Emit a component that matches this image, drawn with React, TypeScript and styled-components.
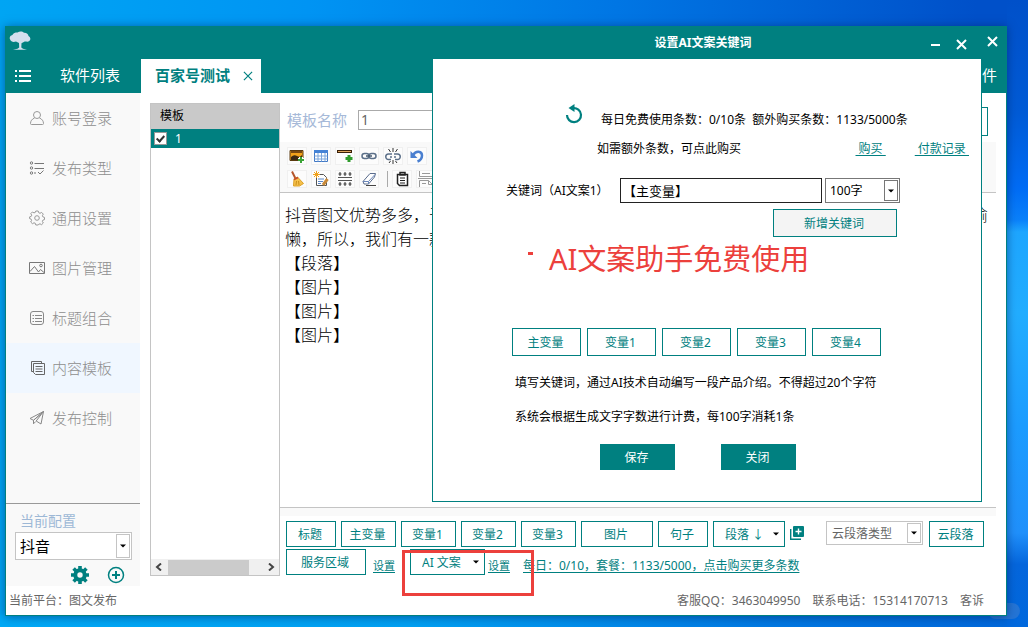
import React from "react";
import styled, { createGlobalStyle } from "styled-components";

const TEAL = "#008080";
const UI = `"Noto Sans", "Noto Sans CJK SC", sans-serif`;

const GlobalStyle = createGlobalStyle`
  *, *::before, *::after { box-sizing: border-box; }
  body { margin: 0; font-family: ${UI}; font-size: 12px; color: #000; }
  button, input, select { font: inherit; color: inherit; margin: 0; border-radius: 0; }
  p { margin: 0; }
`;

/* ---------- desktop and window frame ---------- */

const Desktop = styled.div`
  display: flex;
  position: relative;
  min-height: 100vh;
  padding: 26px 21px 11px 5px;
  background:
    linear-gradient(to bottom, #0050c9 0%, #005bd6 18%, #006cf5 30%, #0a80fa 35%, #1ea6ff 37%, #22adff 50%, #1c9cff 68%, #2090fb 85%, #0566dc 90%, #0068dd 100%) right top / 21px 100% no-repeat,
    linear-gradient(to right, #00a9f6 0%, #00a0f2 40%, #0078e2 75%, #0066da 100%) left bottom / 100% 12px no-repeat,
    linear-gradient(to right, #00a5f3 0%, #0094f3 30%, #0076e4 60%, #0050c9 95%) left top / 100% 100% no-repeat;
`;

const Window = styled.main`
  display: flex;
  flex-direction: column;
  flex: 1;
  min-width: 0;
  position: relative;
  z-index: 0;
  border: 1px solid ${TEAL};
  background: #fff;
  box-shadow: 0 1px 9px rgba(0, 30, 80, 0.5);
`;

const TitleBar = styled.header`
  display: flex;
  align-items: center;
  justify-content: space-between;
  height: 32px;
  padding: 0 8px 4px 3px;
  background: ${TEAL};
`;

const PlainButton = styled.button`
  display: flex;
  align-items: center;
  justify-content: center;
  padding: 0;
  border: 0;
  background: none;
  cursor: pointer;
`;

const TabBar = styled.nav`
  display: flex;
  align-items: center;
  height: 34px;
  padding: 0 9px;
  background: ${TEAL};
  color: #fff;
  font-size: 15px;
`;

const TabLink = styled.a`
  margin-left: 29px;
  padding-bottom: 4px;
  color: #fff;
  text-decoration: none;
`;

const ActiveTab = styled.div`
  display: flex;
  align-items: center;
  gap: 13px;
  align-self: stretch;
  width: 120px;
  margin-left: 21px;
  padding-left: 14px;
  background: #fff;
  color: ${TEAL};
  font-weight: 700;
`;

const TabName = styled.span`
  padding-bottom: 4px;
`;

const TabEnd = styled(TabLink)`
  margin-left: auto;
`;

const Body = styled.div`
  display: flex;
  flex: 1;
`;

/* ---------- sidebar ---------- */

const Sidebar = styled.aside`
  display: flex;
  flex-direction: column;
  width: 134px;
  background: #f9f9f9;
`;

const NavList = styled.div`
  flex: 1;
`;

const NavItem = styled.a<{ $active?: boolean }>`
  display: flex;
  align-items: center;
  gap: 7px;
  height: 50px;
  padding-left: 23px;
  background: ${(p) => (p.$active ? "#f0f7ff" : "transparent")};
  color: #8e8e8e;
  font-size: 15px;
  font-weight: 300;
  text-decoration: none;
`;

const NavText = styled.span`
  padding-bottom: 2px;
`;

const Config = styled.section`
  height: 83px;
  padding: 7px 8px 0 9px;
  border-top: 1px solid #999;
`;

const ConfigLabel = styled.label`
  display: block;
  padding-left: 5px;
  color: #9db8d6;
  font-size: 14px;
  line-height: 20px;
  margin-bottom: 1px;
`;

const ConfigActions = styled.div`
  display: flex;
  gap: 18px;
  padding: 6px 6px 0 56px;
`;

/* ---------- drop-down ---------- */

const SelectBox = styled.span<{ $w: number; $h: number; $border: string }>`
  display: flex;
  position: relative;
  flex: none;
  width: ${(p) => p.$w}px;
  height: ${(p) => p.$h}px;
  border: 1px solid ${(p) => p.$border};
  background: #fff;
`;

const NativeSelect = styled.select<{ $size: number; $pad: number; $color: string }>`
  appearance: none;
  width: 100%;
  padding: 0 0 0 ${(p) => p.$pad}px;
  border: 0;
  outline: 0;
  background: transparent;
  color: ${(p) => p.$color};
  font-size: ${(p) => p.$size}px;
`;

const Arrow = styled.span<{ $frame?: string }>`
  position: absolute;
  top: 1px;
  right: 1px;
  bottom: 1px;
  display: flex;
  align-items: center;
  justify-content: center;
  width: 14px;
  border: 1px solid ${(p) => p.$frame || "transparent"};
  pointer-events: none;
`;

type ComboProps = {
  id?: string;
  label?: string;
  value: string;
  w: number;
  h: number;
  border: string;
  frame?: string;
  size?: number;
  pad?: number;
  color?: string;
};

function Combo({ id, label, value, w, h, border, frame, size = 12, pad = 4, color = "#000" }: ComboProps) {
  return (
    <SelectBox $w={w} $h={h} $border={border}>
      <NativeSelect id={id} aria-label={label} $size={size} $pad={pad} $color={color}>
        <option>{value}</option>
      </NativeSelect>
      <Arrow $frame={frame}>
        <svg width="6" height="4" viewBox="0 0 6 4"><path d="M0 0.5h6L3 3.5z" fill="#000" /></svg>
      </Arrow>
    </SelectBox>
  );
}

/* ---------- template list ---------- */

const TemplateList = styled.section`
  display: flex;
  flex-direction: column;
  width: 130px;
  margin: 10px 0 10px 10px;
  border: 1px solid #c4c4c4;
`;

const ListHeader = styled.div`
  height: 25px;
  padding-left: 9px;
  background: #c9c9c9;
  line-height: 24px;
`;

const ListRow = styled.label`
  display: flex;
  align-items: center;
  gap: 8px;
  height: 19px;
  padding-left: 3px;
  background: ${TEAL};
  color: #fff;
`;

const Tick = styled.input`
  appearance: none;
  width: 13px;
  height: 13px;
  border: 1px solid #999;
  background: #fff;
  position: relative;

  &:checked::after {
    content: "";
    position: absolute;
    left: 3px;
    top: 1px;
    width: 5px;
    height: 8px;
    border: solid #333;
    border-width: 0 2px 2px 0;
    transform: rotate(42deg);
  }
`;

const ListSpace = styled.div`
  flex: 1;
`;

const ScrollBar = styled.div`
  display: flex;
  align-items: center;
  gap: 2px;
  height: 16px;
  background: #f0f0f0;
`;

const ScrollThumb = styled.div`
  width: 81px;
  height: 15px;
  background: #cbcbcb;
`;

const ScrollButton = styled(PlainButton)`
  width: 15px;
  height: 15px;
  &:last-child { margin-left: auto; }
`;

/* ---------- editor ---------- */

const Editor = styled.section`
  display: flex;
  flex-direction: column;
  flex: 1;
  min-width: 0;
  margin-right: 10px;
`;

const NameRow = styled.div`
  display: flex;
  align-items: flex-start;
  gap: 11px;
  padding: 14px 8px 6px 7px;
  color: #a6b9d8;
  font-size: 15px;
  line-height: 27px;
`;

const NameInput = styled.input`
  flex: 1;
  min-width: 0;
  height: 20px;
  margin-top: 3px;
  padding: 0 2px 1px;
  border: 1px solid #aaa;
  color: #666;
  font-size: 14px;
  line-height: 17px;
`;

const OutlineButton = styled.button<{ $w: number; $h?: number; $fill?: string }>`
  flex: none;
  width: ${(p) => p.$w}px;
  height: ${(p) => p.$h || 26}px;
  padding: 0 2px 0 0;
  border: 1px solid ${TEAL};
  background: ${(p) => p.$fill || "#fff"};
  color: ${TEAL};
  white-space: nowrap;
  cursor: pointer;
`;

const Toolbar = styled.div`
  display: flex;
  flex-direction: column;
  gap: 5px;
  padding: 5px 8px 4px 7px;
  border-bottom: 1px solid #c4c4c4;
  background: #f9f9f9;
`;

const ToolRow = styled.div`
  display: flex;
  gap: 4px;
`;

const Tool = styled(PlainButton)`
  width: 20px;
  height: 18px;
  border: 1px solid #f0f0f0;
  background: #fcfcfc;
`;

const Divider = styled.span`
  width: 1px;
  margin: 1px 0 1px 4px;
  background: #aaa;
`;

const Article = styled.article`
  flex: 1;
  padding: 9px 8px 0 5px;
  color: #000;
  font-family: "Noto Sans CJK SC", sans-serif;
  font-size: 16px;
  line-height: 24px;
`;

const Line = styled.p`
  display: flex;
  justify-content: space-between;
  font-weight: 300;
`;

const Strip = styled.div`
  height: 9px;
  border-top: 1px solid #c4c4c4;
  background: #f9f9f9;
`;

const InsertBar = styled.div`
  display: flex;
  flex-direction: column;
  gap: 2px;
  padding: 5px 12px 11px 6px;
`;

const InsertRow = styled.div`
  display: flex;
  gap: 5px;
`;

const CloudGroup = styled.div`
  display: flex;
  gap: 6px;
  margin-left: auto;
`;

const ServiceRow = styled.div`
  display: flex;
  align-items: flex-start;
  height: 26px;
`;

const TextLink = styled.a<{ $gap?: number }>`
  margin-left: ${(p) => p.$gap || 0}px;
  color: ${TEAL};
  line-height: 34px;
  text-decoration: underline;
  text-underline-offset: 2px;
  white-space: pre;
`;

const SmallLink = styled(TextLink)`
  font-size: 11px;
`;

const Marked = styled.div`
  display: flex;
  position: relative;
  margin-left: 15px;
`;

const MarkFrame = styled.span`
  position: absolute;
  left: -8px;
  top: 1px;
  width: 132px;
  height: 46px;
  border: 3px solid #ec403c;
  pointer-events: none;
`;

const StatusBar = styled.footer`
  display: flex;
  gap: 12px;
  height: 29px;
  padding: 0 22px 0 3px;
  color: #666;
  line-height: 30px;
`;

const StatusLeft = styled.span`
  margin-right: auto;
`;

/* ---------- dialog ---------- */

const Dialog = styled.section`
  position: absolute;
  top: 0;
  right: 24px;
  width: 550px;
  max-width: 100%;
  border: solid ${TEAL};
  border-width: 0 1px 1px;
  background: #fff;
`;

const DialogTitle = styled.header`
  display: flex;
  align-items: center;
  height: 32px;
  padding-right: 14px;
  background: ${TEAL};
  color: #fff;
`;

const DialogHeading = styled.h1`
  flex: 1;
  margin: 0;
  padding-left: 43px;
  font-size: 12px;
  font-weight: 700;
  line-height: 30px;
  text-align: center;
`;

const WindowButtons = styled.span`
  display: flex;
  gap: 15px;
  padding-top: 2px;
`;

const DialogBody = styled.form`
  padding: 45px 0 31px;
`;

const QuotaRow = styled.div`
  display: flex;
  gap: 18px;
  height: 32px;
  padding-left: 132px;
  line-height: 32px;
  white-space: pre;
`;

const RefreshButton = styled(PlainButton)`
  width: 18px;
  height: 20px;
`;

const BuyRow = styled.div`
  display: flex;
  justify-content: space-between;
  height: 26px;
  padding: 0 12px 0 164px;
  line-height: 26px;
`;

const BuyLinks = styled.span`
  display: flex;
  gap: 29px;

  ${TextLink} { line-height: 26px; }
`;

const KeywordRow = styled.div`
  display: flex;
  align-items: center;
  margin-top: 16px;
  padding-left: 73px;
`;

const KeywordLabel = styled.label`
  width: 114px;
  padding-bottom: 2px;
`;

const KeywordInput = styled.input`
  width: 202px;
  height: 25px;
  margin-right: 3px;
  padding: 0 2px;
  border: 1px solid #222;
  font-size: 13px;
`;

const AddRow = styled.div`
  display: flex;
  justify-content: flex-end;
  padding: 6px 84px 0 0;
`;

const Banner = styled.p`
  display: flex;
  gap: 16px;
  padding-left: 95px;
  color: #ec403c;
  font-size: 29px;
  line-height: 44px;

  &::before {
    content: "";
    width: 5px;
    height: 3px;
    margin-top: 15px;
    background: #ec403c;
  }
`;

const VariableRow = styled.div`
  display: flex;
  gap: 6px;
  padding: 47px 0 10px 79px;
`;

const Hint = styled.p`
  padding-left: 82px;
  line-height: 34px;
`;

const DialogActions = styled.div`
  display: flex;
  gap: 46px;
  padding: 10px 0 0 167px;
`;

const SolidButton = styled.button`
  width: 75px;
  height: 26px;
  padding: 0 2px 0 0;
  border: 0;
  background: ${TEAL};
  color: #fff;
  cursor: pointer;
`;

const Watermark = styled.span`
  position: absolute;
  right: 8px;
  bottom: 8px;
  width: 32px;
  height: 16px;
  border-radius: 8px;
  background: rgba(120, 150, 200, 0.3);
`;

/* ---------- drawings ---------- */

const Tree = () => (
  <svg width="22" height="20" viewBox="0 0 22 20" fill="#d3dfee" aria-hidden="true">
    <path d="M1 8.2C0 6 2 4.2 3.4 4 4.5 1.700 7 1.500 8.500 1.600 10.500 0 13.500.3 15 1.700 17.500 1.500 19.300 3.200 19.500 5 21.500 6 22 8.500 20.500 9.800 19 11.300 17 10.300 15.700 10.600L12.500 12.200 12.300 16.500 14 17.700 18 18.700H4L8.500 17.700 10.200 16.500 10 12 7 10.500C4.500 11.300 2 11 1 8.200z" />
  </svg>
);

const Cross = ({ size = 11, width = 2, color = "#fff" }) => (
  <svg width={size} height={size} viewBox="0 0 11 11" stroke={color} strokeWidth={width} aria-hidden="true">
    <path d="M1 1l9 9M10 1l-9 9" />
  </svg>
);

const Stroke = ({ children, color = "#999", size = 16 }: { children: React.ReactNode; color?: string; size?: number }) => (
  <svg width={size} height={size} viewBox="0 0 16 16" fill="none" stroke={color} strokeWidth="1" aria-hidden="true">
    {children}
  </svg>
);

const NAV = [
  {
    text: "账号登录",
    icon: <Stroke><circle cx="8" cy="5" r="3.500" /><path d="M5.500 8C3 9 1.500 11 1.500 13.500q0 1 1 1h11q1 0 1-1C14.500 11 13 9 10.500 8" /></Stroke>,
  },
  {
    text: "发布类型",
    icon: <Stroke color="#777"><circle cx="2.500" cy="3" r="1.200" /><circle cx="2.500" cy="8" r="1.200" /><circle cx="2.500" cy="13" r="1.200" /><path d="M5.500 3.500h9.500M5.500 8.500h9.500M5 13h2M9 12l2 2 3.500-3.500" /></Stroke>,
  },
  {
    text: "通用设置",
    icon: <Stroke><path d="M6.800 1h2.400l.5 1.700 1.300.6 1.600-.9 1.700 1.700-.9 1.600.5 1.200 1.600.5v2.200l-1.600.5-.5 1.300.9 1.600-1.700 1.700-1.600-.9-1.300.5L9.200 15H6.800l-.5-1.700-1.300-.5-1.600.9L1.700 12l.9-1.600-.5-1.300L.6 8.600V6.900L2.200 6.400l.5-1.200-.9-1.600L3.400 2l1.600.9 1.300-.5z" /><circle cx="8" cy="8" r="2.300" /></Stroke>,
  },
  {
    text: "图片管理",
    icon: <Stroke color="#777"><path d="M.5 2.500h15v11H.5zM1 11.500l4.500-5 4 5.500 2-2.500 3.500 3" /><circle cx="12" cy="5.500" r="1.300" /></Stroke>,
  },
  {
    text: "标题组合",
    icon: <Stroke color="#888"><rect x="1.500" y="1.500" width="13" height="13" rx="2.500" /><path d="M3.500 5.500h1.500M6 5.500h7M3.500 8.500h1.500M6 8.500h7M3.500 11.500h1.500M6 11.500h7" /></Stroke>,
  },
  {
    text: "内容模板",
    active: true,
    icon: <Stroke color="#666"><path d="M4.500 11.500h-2v-10h10v2M4.500 3.500h11v11h-9l-2-2zM6.500 6.500h7M6.500 9h7M6.500 11.500h7" /></Stroke>,
  },
  {
    text: "发布控制",
    icon: <Stroke color="#888"><path d="M14.500 1.500L1 8.500l3.500 1.800zM14.500 1.500L4.500 10.300v3.500l2.300-2.300M14.500 1.500L12 14l-4.800-3z" /></Stroke>,
  },
];

const Glyph = ({ children }: { children: React.ReactNode }) => (
  <svg width="16" height="16" viewBox="0 0 16 16" fill="none" aria-hidden="true">{children}</svg>
);

const TOOLS_TOP = [
  {
    name: "图片",
    icon: <Glyph><path d="M1 2.500h13v10H1z" fill="#f2a31b" stroke="#5b3a10" /><path d="M2 9q3-3 6-1t5-1v5H2z" fill="#3c2a14" /><path d="M2 3h11v2H2z" fill="#7a4a12" /><path d="M12 9v6M9 12h6" stroke="#fff" strokeWidth="4" /><path d="M12 9v6M9 12h6" stroke="#3aa336" strokeWidth="2" /></Glyph>,
  },
  {
    name: "表格",
    icon: <Glyph><path d="M1.500 2.500h13v11h-13z" fill="#fff" stroke="#3f77c4" /><path d="M1 2h14v3H1z" fill="#4583d6" /><path d="M1.500 8h13M1.500 11h13M5 5v8.500M8.500 5v8.500M12 5v8.500" stroke="#7ba6dd" /></Glyph>,
  },
  {
    name: "分隔线",
    icon: <Glyph><path d="M0 3.500h15" stroke="#3a2008" strokeWidth="3" /><path d="M1 3.500h13" stroke="#e0a860" /><path d="M12 7v7M8.500 10.500h7" stroke="#2f9b2c" strokeWidth="3" /></Glyph>,
  },
  {
    name: "链接",
    icon: <Glyph><rect x="1" y="5.500" width="7" height="5" rx="2.500" stroke="#5c7089" strokeWidth="1.500" /><rect x="8" y="5.500" width="7" height="5" rx="2.500" stroke="#5c7089" strokeWidth="1.500" /><path d="M5 8h6" stroke="#46586e" strokeWidth="1.500" /></Glyph>,
  },
  {
    name: "取消链接",
    icon: <Glyph><path d="M7 6H3.500a2.500 2.500 0 0 0 0 5.500H6M9 6h3.500a2.500 2.500 0 0 1 0 5.500H10M5 9h2M9 9h2" stroke="#5c7089" strokeWidth="1.500" /><path d="M8 0v4M3.500 1l2 3M12.500 1l-2 3M8 12v4M4 15l1.500-2M12 15l-1.500-2" stroke="#333" /></Glyph>,
  },
  {
    name: "撤销",
    icon: <Glyph><path d="M4 7C7 2 13 3 13 7.500c0 3-2 5-4.500 6" stroke="#4a7fd0" strokeWidth="2.500" /><path d="M1.500 3v7h7z" fill="#4a7fd0" /></Glyph>,
  },
];

const TOOLS_BOTTOM = [
  {
    name: "清除格式",
    icon: <Glyph><path d="M3 0.500l3.500 7" stroke="#b5562a" strokeWidth="2" /><path d="M5 8l3.500-2 6 6.500-4 2.500H4.500z" fill="#f5c04a" stroke="#dba028" /><path d="M7 14l.5-4M10 14l-.5-4" stroke="#c98f1c" /><path d="M5 8.500L9 6.500" stroke="#c4472a" strokeWidth="1.500" /></Glyph>,
  },
  {
    name: "自动排版",
    icon: <Glyph><path d="M3.500 3.500h7l3 3v8h-10z" fill="#fff" stroke="#555" /><path d="M5 8h6M5 10.500h5M5 12.500h3" stroke="#5a86c5" /><path d="M3.500 0v7M0 3.500h7M1 1l5 5M6 1L1 6" stroke="#f0a21c" /><path d="M14.500 8L10 14" stroke="#c88a3a" strokeWidth="3" /></Glyph>,
  },
  {
    name: "段落间距",
    icon: <Glyph><path d="M1 6.500h14M1 9.500h14" stroke="#555" /><path d="M3 1v4M8 1v4M13 1v4M3 11v4M8 11v4M13 11v4M1.500 3h3M6.500 3h3M11.500 3h3M1.500 13h3M6.500 13h3M11.500 13h3" stroke="#333" /></Glyph>,
  },
  {
    name: "橡皮擦",
    icon: <Glyph><path d="M2 10.500L9 2.500h5.500l-1 3.500-6 7H3z" fill="#fff" stroke="#5a6c8c" /><path d="M2 10.500h5.500L14 3.500M7.500 10.500v2.500" stroke="#6b87bb" /><path d="M5 14.500h10" stroke="#444" /></Glyph>,
  },
];

const RefreshIcon = () => (
  <svg width="18" height="20" viewBox="0 0 18 20" aria-hidden="true">
    <path d="M8 4.200A7 7 0 1 1 2 11" fill="none" stroke={TEAL} strokeWidth="2.200" />
    <path d="M9.500 0v8L3.500 4z" fill={TEAL} />
  </svg>
);

export default function App() {
  return (
    <Desktop>
      <GlobalStyle />
      <Watermark />
      <Window>
        <TitleBar>
          <Tree />
          <PlainButton type="button" aria-label="关闭窗口"><Cross /></PlainButton>
        </TitleBar>

        <TabBar>
          <PlainButton type="button" aria-label="菜单">
            <svg width="16" height="13" viewBox="0 0 16 13" fill="#fff" aria-hidden="true">
              <path d="M0 0h2v2H0zM0 5h2v2H0zM0 10h2v2H0zM4 0h12v2H4zM4 5h12v2H4zM4 10h12v2H4z" />
            </svg>
          </PlainButton>
          <TabLink href="#list">软件列表</TabLink>
          <ActiveTab>
            <TabName>百家号测试</TabName>
            <PlainButton type="button" aria-label="关闭标签"><Cross size={10} width={1.3} color={TEAL} /></PlainButton>
          </ActiveTab>
          <TabEnd href="#software">件</TabEnd>
        </TabBar>

        <Body>
          <Sidebar>
            <NavList>
              {NAV.map((n) => (
                <NavItem key={n.text} href="#nav" $active={n.active}>
                  {n.icon}
                  <NavText>{n.text}</NavText>
                </NavItem>
              ))}
            </NavList>
            <Config>
              <ConfigLabel htmlFor="config">当前配置</ConfigLabel>
              <Combo id="config" value="抖音" w={117} h={28} border="#c4c4c4" frame="#c4c4c4" size={15} />
              <ConfigActions>
                <PlainButton type="button" aria-label="设置">
                  <svg width="18" height="18" viewBox="0 0 18 18" aria-hidden="true">
                    <circle cx="9" cy="9" r="4.700" fill="none" stroke={TEAL} strokeWidth="4" />
                    <path d="M9 0v4M9 14v4M0 9h4M14 9h4M2.600 2.600l3 3M12.400 12.400l3 3M15.400 2.600l-3 3M5.600 12.400l-3 3" stroke={TEAL} strokeWidth="3.600" />
                  </svg>
                </PlainButton>
                <PlainButton type="button" aria-label="新增">
                  <svg width="18" height="18" viewBox="0 0 18 18" fill="none" stroke={TEAL} aria-hidden="true">
                    <circle cx="9" cy="9" r="7.500" strokeWidth="1.500" />
                    <path d="M9 5v8M5 9h8" strokeWidth="2" />
                  </svg>
                </PlainButton>
              </ConfigActions>
            </Config>
          </Sidebar>

          <TemplateList>
            <ListHeader>模板</ListHeader>
            <ListRow><Tick type="checkbox" defaultChecked />1</ListRow>
            <ListSpace />
            <ScrollBar>
              <ScrollButton type="button" aria-label="向左">
                <svg width="7" height="8" viewBox="0 0 7 8"><path d="M6 0.500L2 4l4 3.500" fill="none" stroke="#444" strokeWidth="2" /></svg>
              </ScrollButton>
              <ScrollThumb />
              <ScrollButton type="button" aria-label="向右">
                <svg width="7" height="8" viewBox="0 0 7 8"><path d="M1 0.500L5 4 1 7.500" fill="none" stroke="#444" strokeWidth="2" /></svg>
              </ScrollButton>
            </ScrollBar>
          </TemplateList>

          <Editor>
            <NameRow>
              <label htmlFor="name">模板名称</label>
              <NameInput id="name" defaultValue="1" />
              <OutlineButton type="button" $w={80} $h={29} aria-label="保存模板" />
            </NameRow>
            <Toolbar>
              <ToolRow>
                {TOOLS_TOP.map((t) => (
                  <Tool key={t.name} type="button" aria-label={t.name}>{t.icon}</Tool>
                ))}
              </ToolRow>
              <ToolRow>
                {TOOLS_BOTTOM.map((t) => (
                  <Tool key={t.name} type="button" aria-label={t.name}>{t.icon}</Tool>
                ))}
                <Divider />
                <Tool type="button" aria-label="粘贴">
                  <Glyph><path d="M3.500 3.500h10v11h-8l-2-2zM6 1.500h5v2.500H6z" fill="#fff" stroke="#222" strokeWidth="1.500" /><path d="M6 7h5M6 9.500h5M6 12h5" stroke="#222" /></Glyph>
                </Tool>
                <Tool type="button" aria-label="分页">
                  <Glyph><path d="M1.500 0v5.500h13V0M4 2.500h8M1.500 16V9.500h9l4 4V16M10.500 9.500v4h4M0 7.500h16M4 12.500h4" stroke="#999" /></Glyph>
                </Tool>
              </ToolRow>
            </Toolbar>
            <Article>
              <Line><span>抖音图文优势多多，于</span><span>偷</span></Line>
              <Line>懒，所以，我们有一款</Line>
              <Line>【段落】</Line>
              <Line>【图片】</Line>
              <Line>【图片】</Line>
              <Line>【图片】</Line>
            </Article>
            <Strip />
            <InsertBar>
              <InsertRow>
                <OutlineButton type="button" $w={50}>标题</OutlineButton>
                <OutlineButton type="button" $w={55}>主变量</OutlineButton>
                <OutlineButton type="button" $w={55}>变量1</OutlineButton>
                <OutlineButton type="button" $w={55}>变量2</OutlineButton>
                <OutlineButton type="button" $w={55}>变量3</OutlineButton>
                <OutlineButton type="button" $w={72}>图片</OutlineButton>
                <OutlineButton type="button" $w={50}>句子</OutlineButton>
                <Combo label="段落" value="段落 ↓" w={72} h={26} border={TEAL} color={TEAL} pad={11} />
                <PlainButton type="button" aria-label="复制段落">
                  <svg width="14" height="16" viewBox="0 0 14 16" aria-hidden="true">
                    <rect x="3" width="11" height="11" rx="1" fill={TEAL} />
                    <path d="M.7 3v10.300H11" fill="none" stroke={TEAL} strokeWidth="1.400" />
                    <path d="M8.500 2.500v6M5.500 5.500h6" stroke="#fff" strokeWidth="1.400" />
                  </svg>
                </PlainButton>
                <CloudGroup>
                  <Combo label="云段落类型" value="云段落类型" w={97} h={24} border="#c4c4c4" frame="#c4c4c4" color="#666" pad={5} />
                  <OutlineButton type="button" $w={55}>云段落</OutlineButton>
                </CloudGroup>
              </InsertRow>
              <ServiceRow>
                <OutlineButton type="button" $w={80}>服务区域</OutlineButton>
                <SmallLink href="#service" $gap={7}>设置</SmallLink>
                <Marked>
                  <Combo label="AI文案" value="AI 文案" w={75} h={26} border={TEAL} color={TEAL} pad={11} />
                  <SmallLink href="#ai" $gap={3}>设置</SmallLink>
                  <MarkFrame />
                </Marked>
                <TextLink href="#buy" $gap={13}>每日：0/10，套餐：1133/5000，点击购买更多条数</TextLink>
              </ServiceRow>
            </InsertBar>
          </Editor>
        </Body>

        <StatusBar>
          <StatusLeft>当前平台：图文发布</StatusLeft>
          <span>客服QQ：3463049950</span>
          <span>联系电话：15314170713</span>
          <span>客诉</span>
        </StatusBar>

        <Dialog role="dialog" aria-labelledby="dialog-title">
          <DialogTitle>
            <DialogHeading id="dialog-title">设置AI文案关键词</DialogHeading>
            <WindowButtons>
              <PlainButton type="button" aria-label="最小化">
                <svg width="11" height="11" viewBox="0 0 11 11"><path d="M1 6h9" stroke="#fff" strokeWidth="2" /></svg>
              </PlainButton>
              <PlainButton type="button" aria-label="关闭对话框"><Cross /></PlainButton>
            </WindowButtons>
          </DialogTitle>
          <DialogBody onSubmit={(e) => e.preventDefault()}>
            <QuotaRow>
              <RefreshButton type="button" aria-label="刷新"><RefreshIcon /></RefreshButton>
              <span>每日免费使用条数：0/10条  额外购买条数：1133/5000条</span>
            </QuotaRow>
            <BuyRow>
              如需额外条数，可点此购买
              <BuyLinks>
                <TextLink href="#purchase">{"\u00a0购买\u00a0"}</TextLink>
                <TextLink href="#records">{"\u00a0付款记录\u00a0"}</TextLink>
              </BuyLinks>
            </BuyRow>
            <KeywordRow>
              <KeywordLabel htmlFor="keyword">关键词（AI文案1）</KeywordLabel>
              <KeywordInput id="keyword" defaultValue="【主变量】" />
              <Combo label="字数" value="100字" w={75} h={25} border="#777" frame="#777" />
            </KeywordRow>
            <AddRow>
              <OutlineButton type="button" $w={124} $h={28} $fill="#f4f4f4">新增关键词</OutlineButton>
            </AddRow>
            <Banner>AI文案助手免费使用</Banner>
            <VariableRow>
              {["主变量", "变量1", "变量2", "变量3", "变量4"].map((v) => (
                <OutlineButton key={v} type="button" $w={69} $h={28}>{v}</OutlineButton>
              ))}
            </VariableRow>
            <Hint>填写关键词，通过AI技术自动编写一段产品介绍。不得超过20个字符</Hint>
            <Hint>系统会根据生成文字字数进行计费，每100字消耗1条</Hint>
            <DialogActions>
              <SolidButton type="submit">保存</SolidButton>
              <SolidButton type="button">关闭</SolidButton>
            </DialogActions>
          </DialogBody>
        </Dialog>
      </Window>
    </Desktop>
  );
}
